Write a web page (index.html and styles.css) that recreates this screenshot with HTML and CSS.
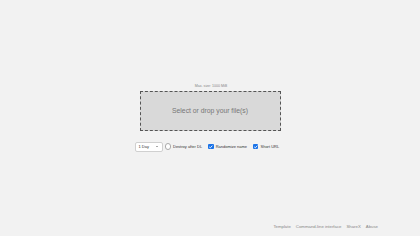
FILE: index.html
```html
<!DOCTYPE html>
<html lang="en">
<head>
<meta charset="utf-8">
<title>Upload</title>
<link rel="stylesheet" href="styles.css">
</head>
<body>
<div class="page">
  <main class="main">
    <div class="uploader">
      <div class="maxsize">Max. size: 1000 MiB</div>
      <div class="dropzone">Select or drop your file(s)</div>
      <div class="options">
        <div class="select">1 Day<span class="caret"></span></div>
        <label class="opt"><span class="box"></span>Destroy after DL</label>
        <label class="opt"><span class="box checked"><svg viewBox="0 0 10 10"><path d="M2.2 5.2 L4.2 7.1 L7.9 3" fill="none" stroke="#fff" stroke-width="1.6"/></svg></span>Randomize name</label>
        <label class="opt"><span class="box checked"><svg viewBox="0 0 10 10"><path d="M2.2 5.2 L4.2 7.1 L7.9 3" fill="none" stroke="#fff" stroke-width="1.6"/></svg></span>Short URL</label>
      </div>
    </div>
  </main>
  <footer class="footer">
    <a>Template</a>
    <a>Command-line interface</a>
    <a>ShareX</a>
    <a>Abuse</a>
  </footer>
</div>
</body>
</html>
```
FILE: styles.css
```css
html, body {
  margin: 0;
  padding: 0;
  height: 100%;
  background: #f2f2f2;
  font-family: "Liberation Sans", Arial, sans-serif;
}
.page {
  height: 236px;
  display: flex;
  flex-direction: column;
}
.main {
  flex: 1;
  display: flex;
  justify-content: center;
  padding-top: 84px;
}
.uploader {
  display: flex;
  flex-direction: column;
  align-items: center;
  width: 145px;
}
.maxsize {
  font-size: 3.6px;
  color: #888;
  line-height: 5px;
  margin-left: 2px;
  margin-bottom: 0.5px;
}
.dropzone {
  margin-top: 1px;
  width: 139px;
  height: 38px;
  border: 1.5px dashed #555;
  background: #d9d9d9;
  color: #777;
  font-size: 6.8px;
  display: flex;
  align-items: center;
  justify-content: center;
}
.options {
  margin-top: 11px;
  align-self: stretch;
  margin-left: -3px;
  display: flex;
  align-items: center;
  gap: 6px;
  font-size: 4px;
  color: #333;
  white-space: nowrap;
}
.select {
  width: 28px;
  height: 10px;
  box-sizing: border-box;
  background: #fff;
  border: 1px solid #d0d0d0;
  border-radius: 2px;
  padding-left: 3px;
  display: flex;
  align-items: center;
  position: relative;
  margin-right: -4px;
}
.caret {
  position: absolute;
  right: 4px;
  top: 3.5px;
  border-left: 1.3px solid transparent;
  border-right: 1.3px solid transparent;
  border-top: 1.6px solid #555;
}
.opt {
  display: flex;
  align-items: center;
  gap: 2px;
}
.box {
  width: 4.5px;
  height: 4.5px;
  border: 0.7px solid #aaa;
  border-radius: 50%;
  background: #fff;
  display: inline-block;
}
.box.checked {
  border: none;
  width: 5.5px;
  height: 5.5px;
  background: #1a73e8;
  border-radius: 1px;
  display: flex;
}
.box svg {
  width: 5.5px;
  height: 5.5px;
}
.footer {
  display: flex;
  justify-content: flex-end;
  gap: 5px;
  padding: 0 42px 7px 0;
  font-size: 4.3px;
  color: #888;
}
```
